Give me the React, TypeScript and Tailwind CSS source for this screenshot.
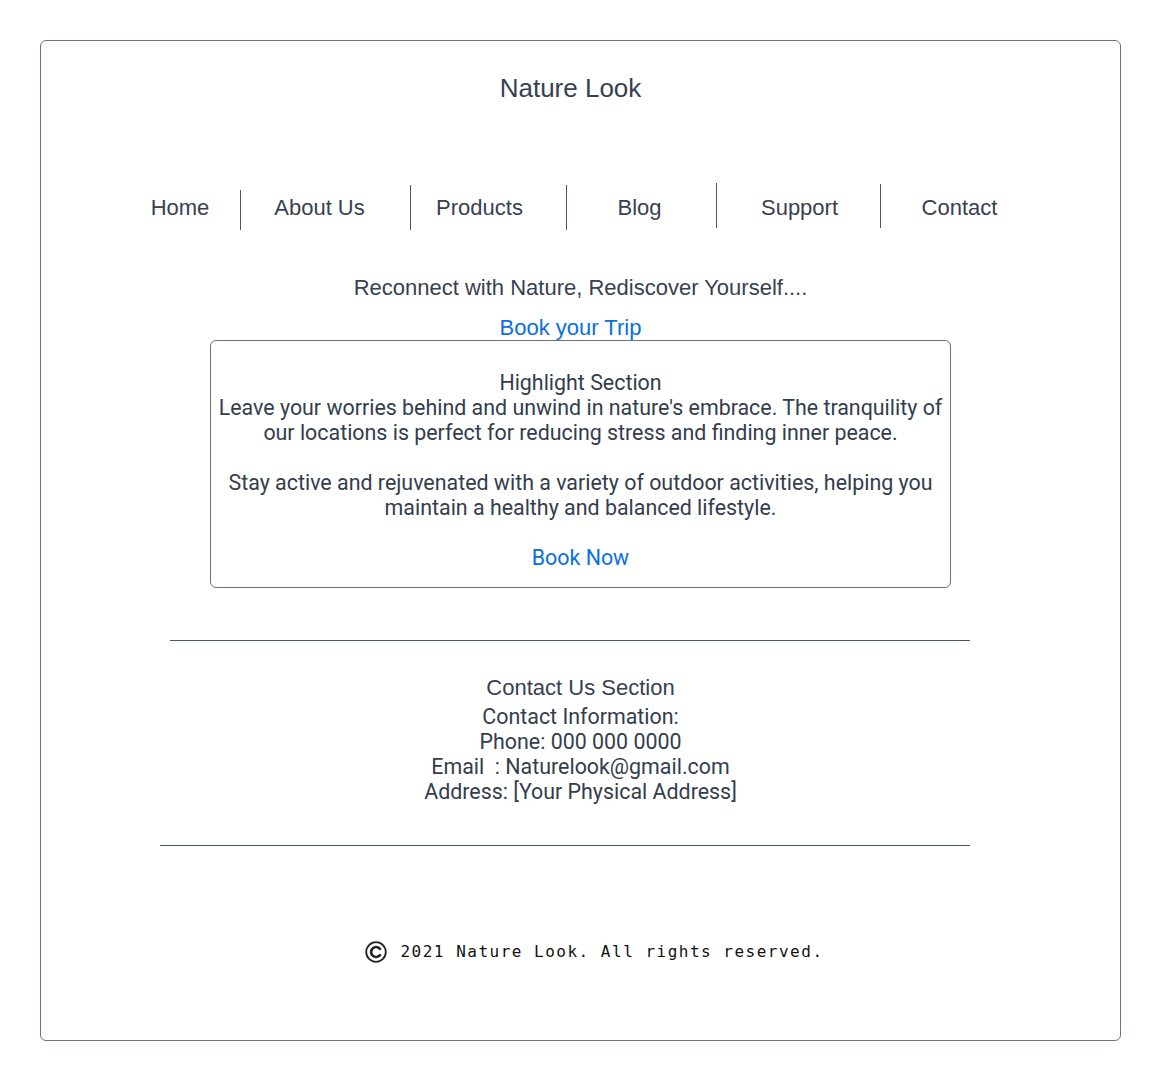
import React from 'react';

const navItems = [
  { label: 'Home', cell: 'w-[119px]', pad: '' },
  { label: 'About Us', cell: 'w-[169px]', pad: 'pr-[11px]' },
  { label: 'Products', cell: 'w-[155px]', pad: 'pr-[17px]' },
  { label: 'Blog', cell: 'w-[149px]', pad: 'pr-[3px]' },
  { label: 'Support', cell: 'w-[163px]', pad: 'pl-[3px]' },
  { label: 'Contact', cell: 'w-[160px]', pad: 'pr-[2px]' },
];

// divider lines between nav cells, each one drawn a bit differently
const dividers = [
  'mt-[7px] h-[40px]',
  'mt-[2px] h-[45px]',
  'mt-[2px] h-[45px]',
  'mt-0 h-[45px]',
  'mt-[1px] h-[44px]',
];

const CopyrightMark = () => (
  <svg width="22" height="22" viewBox="0 0 22 22" fill="none" className="shrink-0">
    <circle cx="11" cy="11" r="9.8" stroke="#222" strokeWidth="1.8" />
    <path d="M15 7.8 A5 5 0 1 0 15 14.2" stroke="#222" strokeWidth="2.6" strokeLinecap="round" />
  </svg>
);

const App: React.FC = () => {
  return (
    <div className="min-h-screen bg-white p-10 font-['Liberation_Sans',Arial,sans-serif] text-[#374151]">
      <div className="h-[1001px] w-[1081px] rounded-md border border-[#6b7280] flex flex-col">
        {/* Title */}
        <h1 className="mt-8 pr-5 text-center text-[26px] leading-[30px] font-normal">Nature Look</h1>

        {/* Navigation */}
        <nav className="mt-20 flex justify-center items-start h-[47px]">
          {navItems.map((item, i) => (
            <React.Fragment key={item.label}>
              <div className={`${item.cell} ${item.pad} h-[47px] pt-[3px] flex items-center justify-center text-[22px] leading-[24px]`}>
                {item.label}
              </div>
              {i < dividers.length && <div className={`w-px shrink-0 bg-[#4b5563] ${dividers[i]}`} />}
            </React.Fragment>
          ))}
        </nav>

        {/* Hero */}
        <p className="mt-[46px] text-center text-[22px] leading-[24px]">Reconnect with Nature, Rediscover Yourself....</p>
        <a href="#" className="mt-4 mr-5 self-center text-[22px] leading-[24px] text-[#0b6fe3]">Book your Trip</a>

        {/* Highlight Section */}
        <div className="self-center w-[741px] rounded-md border border-[#6b7280] px-[6px] pt-[29px] pb-[17px] text-center font-['Roboto',sans-serif] text-[21.4px] leading-[25px] text-[#333d4d]">
          <p>Highlight Section</p>
          <p>Leave your worries behind and unwind in nature's embrace. The tranquility of our locations is perfect for reducing stress and finding inner peace.</p>
          <p className="mt-[25px]">Stay active and rejuvenated with a variety of outdoor activities, helping you maintain a healthy and balanced lifestyle.</p>
          <p className="mt-[25px]">
            <a href="#" className="text-[#0b6fe3]">Book Now</a>
          </p>
        </div>

        <hr className="mt-[52px] ml-[129px] w-[800px] border-0 border-t border-[#4b5563]" />

        {/* Contact Us Section */}
        <h2 className="mt-[35px] text-center text-[22px] leading-[24px] font-normal">Contact Us Section</h2>
        <div className="mt-1 text-center font-['Roboto',sans-serif] text-[21.4px] leading-[25px] text-[#333d4d]">
          <p>Contact Information:</p>
          <p>Phone: 000 000 0000</p>
          <p>Email&nbsp; : Naturelook@gmail.com</p>
          <p>Address: [Your Physical Address]</p>
        </div>

        <hr className="mt-[41px] ml-[119px] w-[810px] border-0 border-t border-[#4b5563]" />

        {/* Footer */}
        <footer className="mt-[94px] ml-[28px] flex items-center justify-center gap-[13px]">
          <CopyrightMark />
          <span className="font-['DejaVu_Sans_Mono',monospace] text-[16px] leading-[24px] tracking-[1.5px] text-[#111]">
            2021 Nature Look. All rights reserved.
          </span>
        </footer>
      </div>
    </div>
  );
};

export default App;
